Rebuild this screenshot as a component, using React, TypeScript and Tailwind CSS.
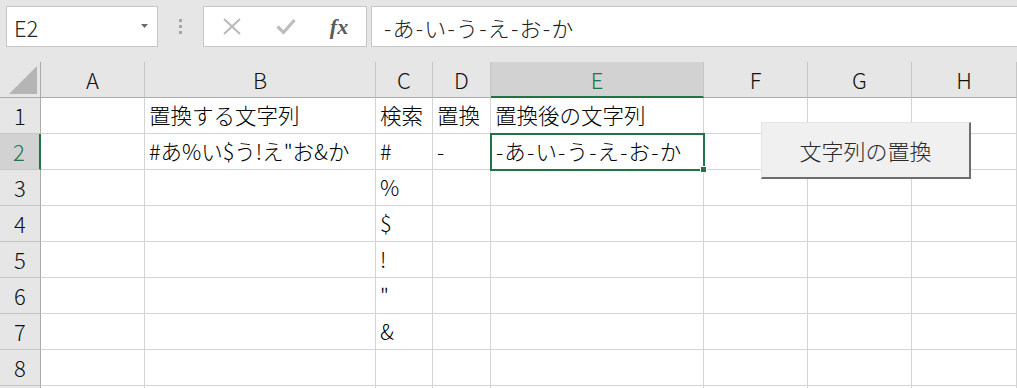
import React from 'react';

const FONT = "font-['Noto_Sans_CJK_JP','Noto_Sans',sans-serif]";

const columns = [
  { key: 'A', selected: false },
  { key: 'B', selected: false },
  { key: 'C', selected: false },
  { key: 'D', selected: false },
  { key: 'E', selected: true },
  { key: 'F', selected: false },
  { key: 'G', selected: false },
  { key: 'H', selected: false },
];

// cell values keyed by "col+row"
const cells: Record<string, string> = {
  B1: '置換する文字列',
  C1: '検索',
  D1: '置換',
  E1: '置換後の文字列',
  B2: '#あ%い$う!え"お&か',
  C2: '#',
  D2: '-',
  E2: '-あ-い-う-え-お-か',
  C3: '%',
  C4: '$',
  C5: '!',
  C6: '"',
  C7: '&',
};

const rows = [1, 2, 3, 4, 5, 6, 7, 8, 9];

const FormulaBar: React.FC = () => {
  return (
    <div className="flex h-[62px] items-start bg-[#e6e6e6] pt-[6px]">
      {/* Name box */}
      <div className="ml-[6px] flex h-[41px] w-[152px] items-center justify-between border border-[#c6c6c6] bg-white pl-[7px] pr-[9px]">
        <span className="text-[22px] font-light leading-none text-[#262626]">E2</span>
        <svg width="7" height="4" viewBox="0 0 7 4" className="mb-[2px]">
          <path d="M0 0 L7 0 L3.5 4 Z" fill="#6b6b6b" />
        </svg>
      </div>

      {/* Grip dots */}
      <div className="flex h-[41px] w-[45px] flex-col items-center justify-center gap-[3px]">
        <div className="h-[3px] w-[3px] bg-[#a6a6a6]" />
        <div className="h-[3px] w-[3px] bg-[#a6a6a6]" />
        <div className="h-[3px] w-[3px] bg-[#a6a6a6]" />
      </div>

      {/* Cancel / enter / insert function */}
      <div className="flex h-[41px] w-[164px] items-center border border-[#c6c6c6] bg-white">
        <div className="flex w-[54px] justify-center pl-[2px]">
          <svg width="18" height="17" viewBox="0 0 18 17">
            <path d="M1 1 L17 16 M17 1 L1 16" stroke="#b9b9b9" strokeWidth="2" fill="none" />
          </svg>
        </div>
        <div className="flex w-[54px] justify-center pl-[2px]">
          <svg width="20" height="17" viewBox="0 0 20 17">
            <path d="M1.5 8.5 L7.5 14.5 L18.5 2" stroke="#bdbdbd" strokeWidth="3.2" fill="none" />
          </svg>
        </div>
        <div className="flex w-[54px] justify-center">
          <span className="font-['Liberation_Serif',serif] text-[22px] font-bold italic leading-none text-[#5a5a5a]">
            fx
          </span>
        </div>
      </div>

      {/* Formula input */}
      <div className="ml-[4px] flex h-[41px] flex-1 items-center border border-r-0 border-[#c6c6c6] bg-white pl-[12px]">
        <span className="text-[22px] font-light leading-none tracking-[1.2px] text-[#222]">-あ-い-う-え-お-か</span>
      </div>
    </div>
  );
};

const Sheet: React.FC = () => {
  return (
    <div className="relative">
      <div className="grid grid-cols-[41px_104px_231px_57px_58px_213px_104px_104px_105px] grid-rows-[36px_repeat(9,36px)]">
        {/* select-all corner */}
        <div className="flex items-end justify-end border-r border-b border-r-[#ababab] border-b-[#ababab] bg-[#e6e6e6] pb-[3px] pr-[3px]">
          <svg width="28" height="28" viewBox="0 0 28 28">
            <path d="M0 28 L28 0 L28 28 Z" fill="#b5b5b5" />
          </svg>
        </div>

        {columns.map((c) =>
          c.selected ? (
            <div
              key={c.key}
              className="flex items-center justify-center border-r border-b-2 border-r-[#c6c6c6] border-b-[#217346] bg-[#d2d2d2] pt-[1px] text-[22px] font-light text-[#217346]"
            >
              {c.key}
            </div>
          ) : (
            <div
              key={c.key}
              className="flex items-center justify-center border-r border-b border-r-[#c6c6c6] border-b-[#ababab] bg-[#e6e6e6] text-[22px] font-light text-[#111]"
            >
              {c.key}
            </div>
          )
        )}

        {rows.map((r) => (
          <React.Fragment key={r}>
            {r === 2 ? (
              <div className="flex items-center justify-center border-r-2 border-b border-r-[#217346] border-b-[#c6c6c6] bg-[#d2d2d2] pr-[1px] text-[22px] font-light text-[#217346]">
                {r}
              </div>
            ) : (
              <div className="flex items-center justify-center border-r border-b border-r-[#ababab] border-b-[#c6c6c6] bg-[#e6e6e6] text-[22px] font-light text-[#111]">
                {r < 9 ? r : ''}
              </div>
            )}
            {columns.map((c) => (
              <div
                key={c.key}
                className={
                  c.key + r === 'E2'
                    ? 'flex items-center overflow-visible whitespace-nowrap border-r border-b border-[#d4d4d4] bg-white pl-[5px] text-[21.5px] font-light tracking-[1.2px] text-black'
                    : 'flex items-center overflow-visible whitespace-nowrap border-r border-b border-[#d4d4d4] bg-white pl-[4px] text-[21.5px] font-light text-black'
                }
              >
                {cells[c.key + r] ?? ''}
              </div>
            ))}
          </React.Fragment>
        ))}
      </div>

      {/* active cell outline (E2) */}
      <div className="pointer-events-none absolute left-[490px] top-[71px] h-[38px] w-[215px] border-2 border-[#217346]" />
      <div className="pointer-events-none absolute left-[700px] top-[104px] h-[7px] w-[7px] border border-white bg-[#217346]" />

      {/* form button */}
      <button className="absolute left-[761px] top-[60px] flex h-[57px] w-[210px] items-center justify-center border-t border-l border-r-2 border-b-2 border-t-[#e4e4e4] border-l-[#e4e4e4] border-r-[#6e6e6e] border-b-[#6e6e6e] bg-[#f0f0f0] text-[22px] font-light text-[#2a2a2a]">
        文字列の置換
      </button>
    </div>
  );
};

export default function App() {
  return (
    <div className={`h-[388px] w-[1017px] overflow-hidden bg-white ${FONT}`}>
      <FormulaBar />
      <Sheet />
    </div>
  );
}
